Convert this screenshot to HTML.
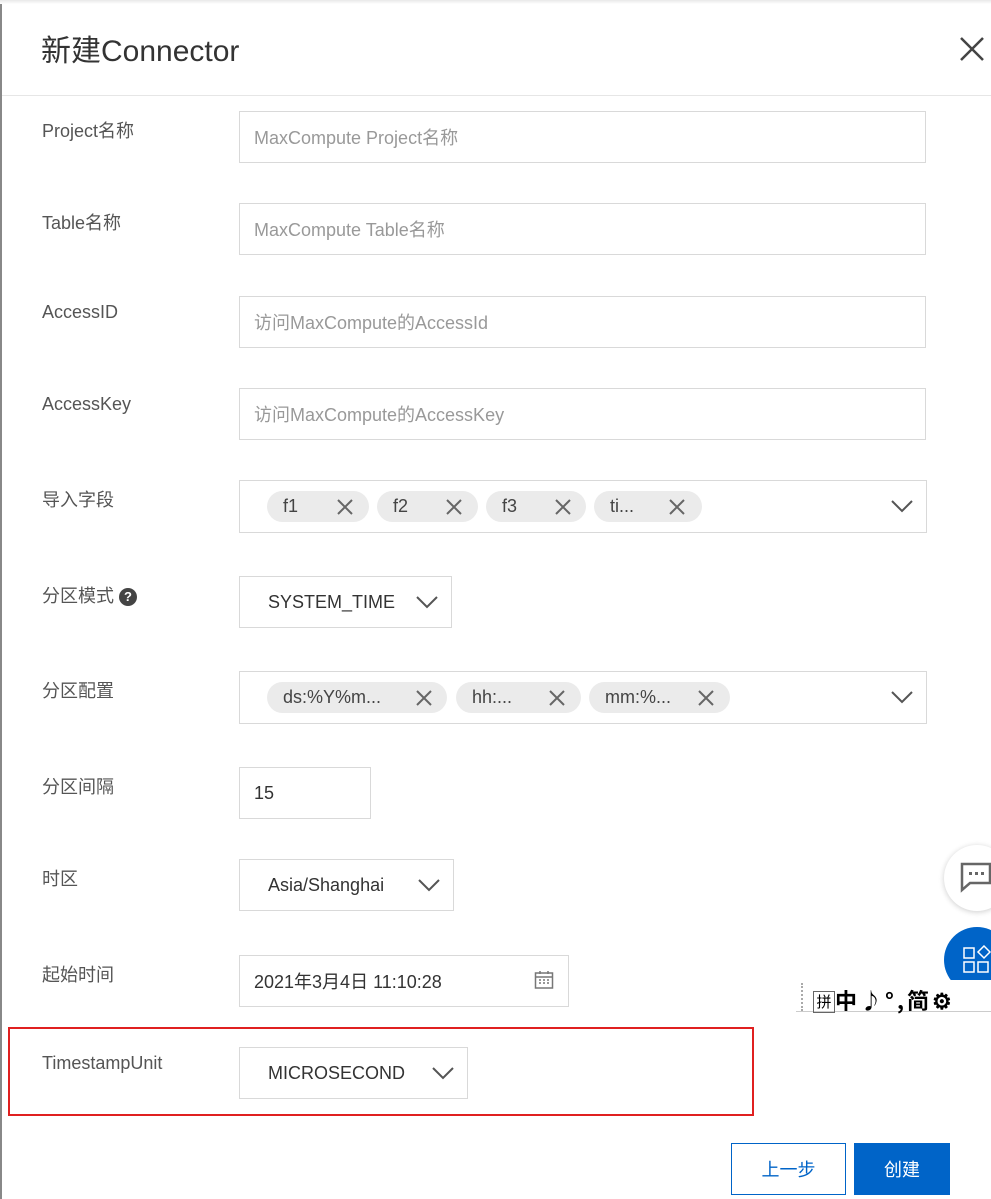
<!DOCTYPE html>
<html><head><meta charset="utf-8"><style>
*{box-sizing:border-box;margin:0;padding:0}
body{width:991px;height:1199px;background:#fff;font-family:"Liberation Sans","Noto Sans CJK SC",sans-serif;position:relative;overflow:hidden;color:#333}
.abs{position:absolute}
.lbl{position:absolute;left:42px;font-size:18px;color:#555}
.inp{position:absolute;border:1px solid #d9d9d9;background:#fff;font-size:18px;color:#999;padding-left:14px;display:flex;align-items:center}
.val{color:#333}
.pill{position:absolute;height:31px;background:#ebebeb;border-radius:16px;font-size:18px;color:#444;display:flex;align-items:center;padding-left:16px}
.x{position:absolute;width:18px;height:18px}
.chev{position:absolute;width:22px;height:14px}
</style></head><body>
<div class="abs" style="left:0;top:0;width:2px;height:1199px;background:#888"></div>
<div class="abs" style="left:0;top:0;width:991px;height:4px;background:linear-gradient(#e8e8e8,#fff)"></div>
<div class="abs" style="left:41px;top:26px;font-size:30px;color:#333">新建Connector</div>
<svg class="abs" style="left:959px;top:36px" width="26" height="26"><path d="M2 2L24 24M24 2L2 24" stroke="#444" stroke-width="2.5"/></svg>
<div class="abs" style="left:2px;top:95px;width:989px;height:1px;background:#e6e6e6"></div>

<div class="lbl" style="top:117px">Project名称</div>
<div class="inp" style="left:239px;top:111px;width:687px;height:52px">MaxCompute Project名称</div>
<div class="lbl" style="top:209px">Table名称</div>
<div class="inp" style="left:239px;top:203px;width:687px;height:52px">MaxCompute Table名称</div>
<div class="lbl" style="top:302px">AccessID</div>
<div class="inp" style="left:239px;top:296px;width:687px;height:52px">访问MaxCompute的AccessId</div>
<div class="lbl" style="top:394px">AccessKey</div>
<div class="inp" style="left:239px;top:388px;width:687px;height:52px">访问MaxCompute的AccessKey</div>

<div class="lbl" style="top:486px">导入字段</div>
<div class="inp" style="left:239px;top:480px;width:688px;height:53px"></div>
<div class="pill" style="left:267px;top:491px;width:102px">f1</div>
<div class="pill" style="left:377px;top:491px;width:101px">f2</div>
<div class="pill" style="left:486px;top:491px;width:100px">f3</div>
<div class="pill" style="left:594px;top:491px;width:108px">ti...</div>
<svg class="x" style="left:336px;top:498px"><path d="M2 2L16 16M16 2L2 16" stroke="#666" stroke-width="2"/></svg>
<svg class="x" style="left:445px;top:498px"><path d="M2 2L16 16M16 2L2 16" stroke="#666" stroke-width="2"/></svg>
<svg class="x" style="left:554px;top:498px"><path d="M2 2L16 16M16 2L2 16" stroke="#666" stroke-width="2"/></svg>
<svg class="x" style="left:668px;top:498px"><path d="M2 2L16 16M16 2L2 16" stroke="#666" stroke-width="2"/></svg>
<svg class="chev" style="left:891px;top:499px"><path d="M1 2L11 12L21 2" stroke="#555" stroke-width="2" fill="none"/></svg>

<div class="lbl" style="top:582px">分区模式 <span style="display:inline-block;width:18px;height:18px;border-radius:50%;background:#444;color:#fff;font-size:13px;text-align:center;line-height:18px;font-weight:bold;vertical-align:1px">?</span></div>
<div class="inp val" style="left:239px;top:576px;width:213px;height:52px;padding-left:28px">SYSTEM_TIME</div>
<svg class="chev" style="left:416px;top:595px"><path d="M1 2L11 12L21 2" stroke="#555" stroke-width="2" fill="none"/></svg>

<div class="lbl" style="top:677px">分区配置</div>
<div class="inp" style="left:239px;top:671px;width:688px;height:53px"></div>
<div class="pill" style="left:267px;top:682px;width:180px">ds:%Y%m...</div>
<div class="pill" style="left:456px;top:682px;width:125px">hh:...</div>
<div class="pill" style="left:589px;top:682px;width:141px">mm:%...</div>
<svg class="x" style="left:415px;top:689px"><path d="M2 2L16 16M16 2L2 16" stroke="#666" stroke-width="2"/></svg>
<svg class="x" style="left:548px;top:689px"><path d="M2 2L16 16M16 2L2 16" stroke="#666" stroke-width="2"/></svg>
<svg class="x" style="left:697px;top:689px"><path d="M2 2L16 16M16 2L2 16" stroke="#666" stroke-width="2"/></svg>
<svg class="chev" style="left:891px;top:690px"><path d="M1 2L11 12L21 2" stroke="#555" stroke-width="2" fill="none"/></svg>

<div class="lbl" style="top:773px">分区间隔</div>
<div class="inp val" style="left:239px;top:767px;width:132px;height:52px">15</div>
<div class="lbl" style="top:865px">时区</div>
<div class="inp val" style="left:239px;top:859px;width:215px;height:52px;padding-left:28px">Asia/Shanghai</div>
<svg class="chev" style="left:418px;top:878px"><path d="M1 2L11 12L21 2" stroke="#555" stroke-width="2" fill="none"/></svg>

<div class="lbl" style="top:961px">起始时间</div>
<div class="inp val" style="left:239px;top:955px;width:330px;height:52px">2021年3月4日 11:10:28</div>
<svg class="abs" style="left:534px;top:970px" width="20" height="20"><rect x="1.5" y="3" width="17" height="15" fill="none" stroke="#777" stroke-width="1.5"/><path d="M1.5 7H18.5M6 1V4M14 1V4" stroke="#777" stroke-width="1.5"/><path d="M5 10h2M9 10h2M13 10h2M5 13h2M9 13h2M13 13h2" stroke="#777" stroke-width="1.5"/></svg>

<div class="abs" style="left:8px;top:1027px;width:746px;height:89px;border:2px solid #e02020"></div>
<div class="lbl" style="top:1053px">TimestampUnit</div>
<div class="inp val" style="left:239px;top:1047px;width:229px;height:52px;padding-left:28px">MICROSECOND</div>
<svg class="chev" style="left:432px;top:1066px"><path d="M1 2L11 12L21 2" stroke="#555" stroke-width="2" fill="none"/></svg>

<div class="abs" style="left:731px;top:1143px;width:115px;height:52px;border:1px solid #0064c8;color:#0064c8;font-size:18px;display:flex;align-items:center;justify-content:center">上一步</div>
<div class="abs" style="left:854px;top:1143px;width:96px;height:52px;background:#0064c8;color:#fff;font-size:18px;display:flex;align-items:center;justify-content:center">创建</div>

<div class="abs" style="left:944px;top:845px;width:66px;height:66px;border-radius:50%;background:#fff;box-shadow:0 1px 6px rgba(0,0,0,.2)"></div>
<svg class="abs" style="left:960px;top:862px" width="31" height="32"><path d="M2 2H30V21H10L2 28Z" fill="none" stroke="#666" stroke-width="2.5"/><rect x="9" y="10" width="3" height="3" fill="#666"/><rect x="15" y="10" width="3" height="3" fill="#666"/><rect x="21" y="10" width="3" height="3" fill="#666"/></svg>
<div class="abs" style="left:944px;top:927px;width:66px;height:66px;border-radius:50%;background:#0064c8"></div>
<svg class="abs" style="left:963px;top:945px" width="28" height="30"><rect x="1" y="3" width="10" height="10" fill="none" stroke="#fff" stroke-width="1.5"/><rect x="1" y="17" width="10" height="10" fill="none" stroke="#fff" stroke-width="1.5"/><rect x="15" y="17" width="10" height="10" fill="none" stroke="#fff" stroke-width="1.5"/><path d="M21 1L27 7L21 13L15 7Z" fill="none" stroke="#fff" stroke-width="1.5"/></svg>
<div class="abs" style="left:796px;top:980px;width:195px;height:32px;background:#fff;border-bottom:1px solid #ccc"></div>
<div class="abs" style="left:801px;top:983px;width:2px;height:28px;border-left:2px dotted #aaa"></div>
<div class="abs" style="left:813px;top:984px;font-size:22px;font-weight:bold;color:#000;white-space:nowrap;font-family:'Noto Sans CJK SC',sans-serif;letter-spacing:3px"><span style="display:inline-block;width:22px;height:22px;font-size:15px;border:1px solid #666;text-align:center;line-height:20px;font-weight:normal;vertical-align:2px;letter-spacing:0">拼</span>中♪°,简⚙</div>
</body></html>
